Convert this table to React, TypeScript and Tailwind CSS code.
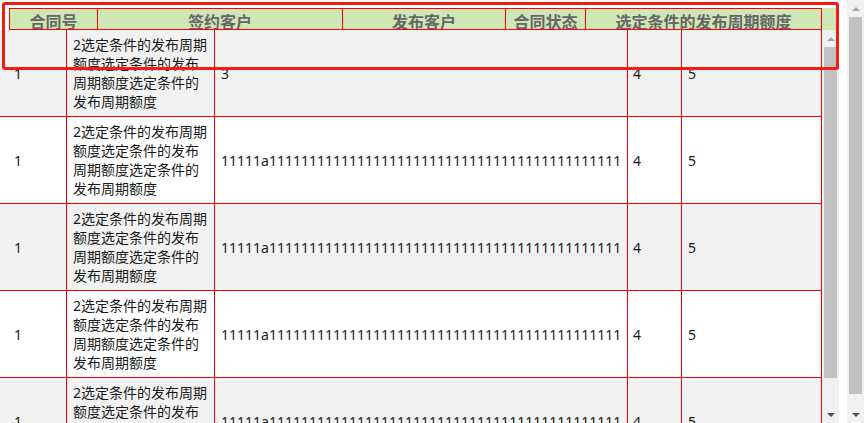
const headers = [
  { label: '合同号', w: 'w-[88px]' },
  { label: '签约客户', w: 'w-[245px]' },
  { label: '发布客户', w: 'w-[163px]' },
  { label: '合同状态', w: 'w-[80px]' },
  { label: '选定条件的发布周期额度', w: 'w-[236px]' },
]

const longText = '2选定条件的发布周期额度选定条件的发布周期额度选定条件的发布周期额度'
const longNum = '11111a' + '1'.repeat(44)

const rows = [
  { id: '1', name: longText, publisher: '3', status: '4', amount: '5' },
  { id: '1', name: longText, publisher: longNum, status: '4', amount: '5' },
  { id: '1', name: longText, publisher: longNum, status: '4', amount: '5' },
  { id: '1', name: longText, publisher: longNum, status: '4', amount: '5' },
  { id: '1', name: longText, publisher: longNum, status: '4', amount: '5' },
]

function Scrollbar({ thumbBottom }: { thumbBottom: string }) {
  return (
    <div className="w-[17px] h-full bg-[#f0f0f0] flex flex-col shrink-0">
      <div className="h-[17px] flex items-center justify-center">
        <div className="w-0 h-0 border-l-[4px] border-r-[4px] border-b-[4px] border-l-transparent border-r-transparent border-b-[#a3a3a3]" />
      </div>
      <div className={`flex-1 px-[2px] ${thumbBottom}`}>
        <div className="h-full bg-[#c1c1c1]" />
      </div>
      <div className="h-[17px] flex items-center justify-center">
        <div className="w-0 h-0 border-l-[4px] border-r-[4px] border-t-[4px] border-l-transparent border-r-transparent border-t-[#505050]" />
      </div>
    </div>
  )
}

export default function App() {
  return (
    <div
      className="flex w-[864px] h-[423px] overflow-hidden bg-white"
      style={{ fontFamily: '"Noto Sans", "Noto Sans CJK SC", sans-serif' }}
    >
      <div className="relative w-[847px] h-full shrink-0 flex flex-col">
        {/* 表头 */}
        <div className="mt-[8px] ml-[9px] w-[830px] bg-[#cfe7b5] flex shrink-0">
          <div className="flex border-t border-b border-l border-[#ff0000]">
            {headers.map((h) => (
              <div
                key={h.label}
                className={`${h.w} h-[20px] border-r border-[#ff0000] text-center text-[16px] leading-[20px] font-bold text-[#666] overflow-hidden pt-[3px]`}
              >
                {h.label}
              </div>
            ))}
          </div>
        </div>

        {/* 表体 */}
        <div className="flex h-[393px] w-[839px]">
          <div className="w-[822px] h-full overflow-hidden">
            {rows.map((r, i) => (
              <div
                key={i}
                className={`grid grid-cols-[67px_148px_413px_54px_140px] h-[87px] border-b border-[#ff0000] text-[14px] leading-[19px] text-[#1a1a1a] ${
                  i % 2 === 0 ? 'bg-[#f2f2f2]' : 'bg-white'
                }`}
              >
                <div className="flex items-center border-r border-[#ff0000] pl-[14px]">{r.id}</div>
                <div className="flex items-center border-r border-[#ff0000] px-[6px]">{r.name}</div>
                <div className="flex items-center border-r border-[#ff0000] px-[6px] whitespace-nowrap overflow-hidden">
                  {r.publisher}
                </div>
                <div className="flex items-center border-r border-[#ff0000] pl-[5px]">{r.status}</div>
                <div className="flex items-center border-r border-[#ff0000] pl-[6px]">{r.amount}</div>
              </div>
            ))}
          </div>
          <Scrollbar thumbBottom="pb-[28px]" />
        </div>

        {/* 标注框 */}
        <div className="absolute left-[2px] top-[2px] w-[837px] h-[68px] border-[3px] border-[#f41c12] rounded-[3px] pointer-events-none" />
      </div>

      <Scrollbar thumbBottom="pb-[12px]" />
    </div>
  )
}
